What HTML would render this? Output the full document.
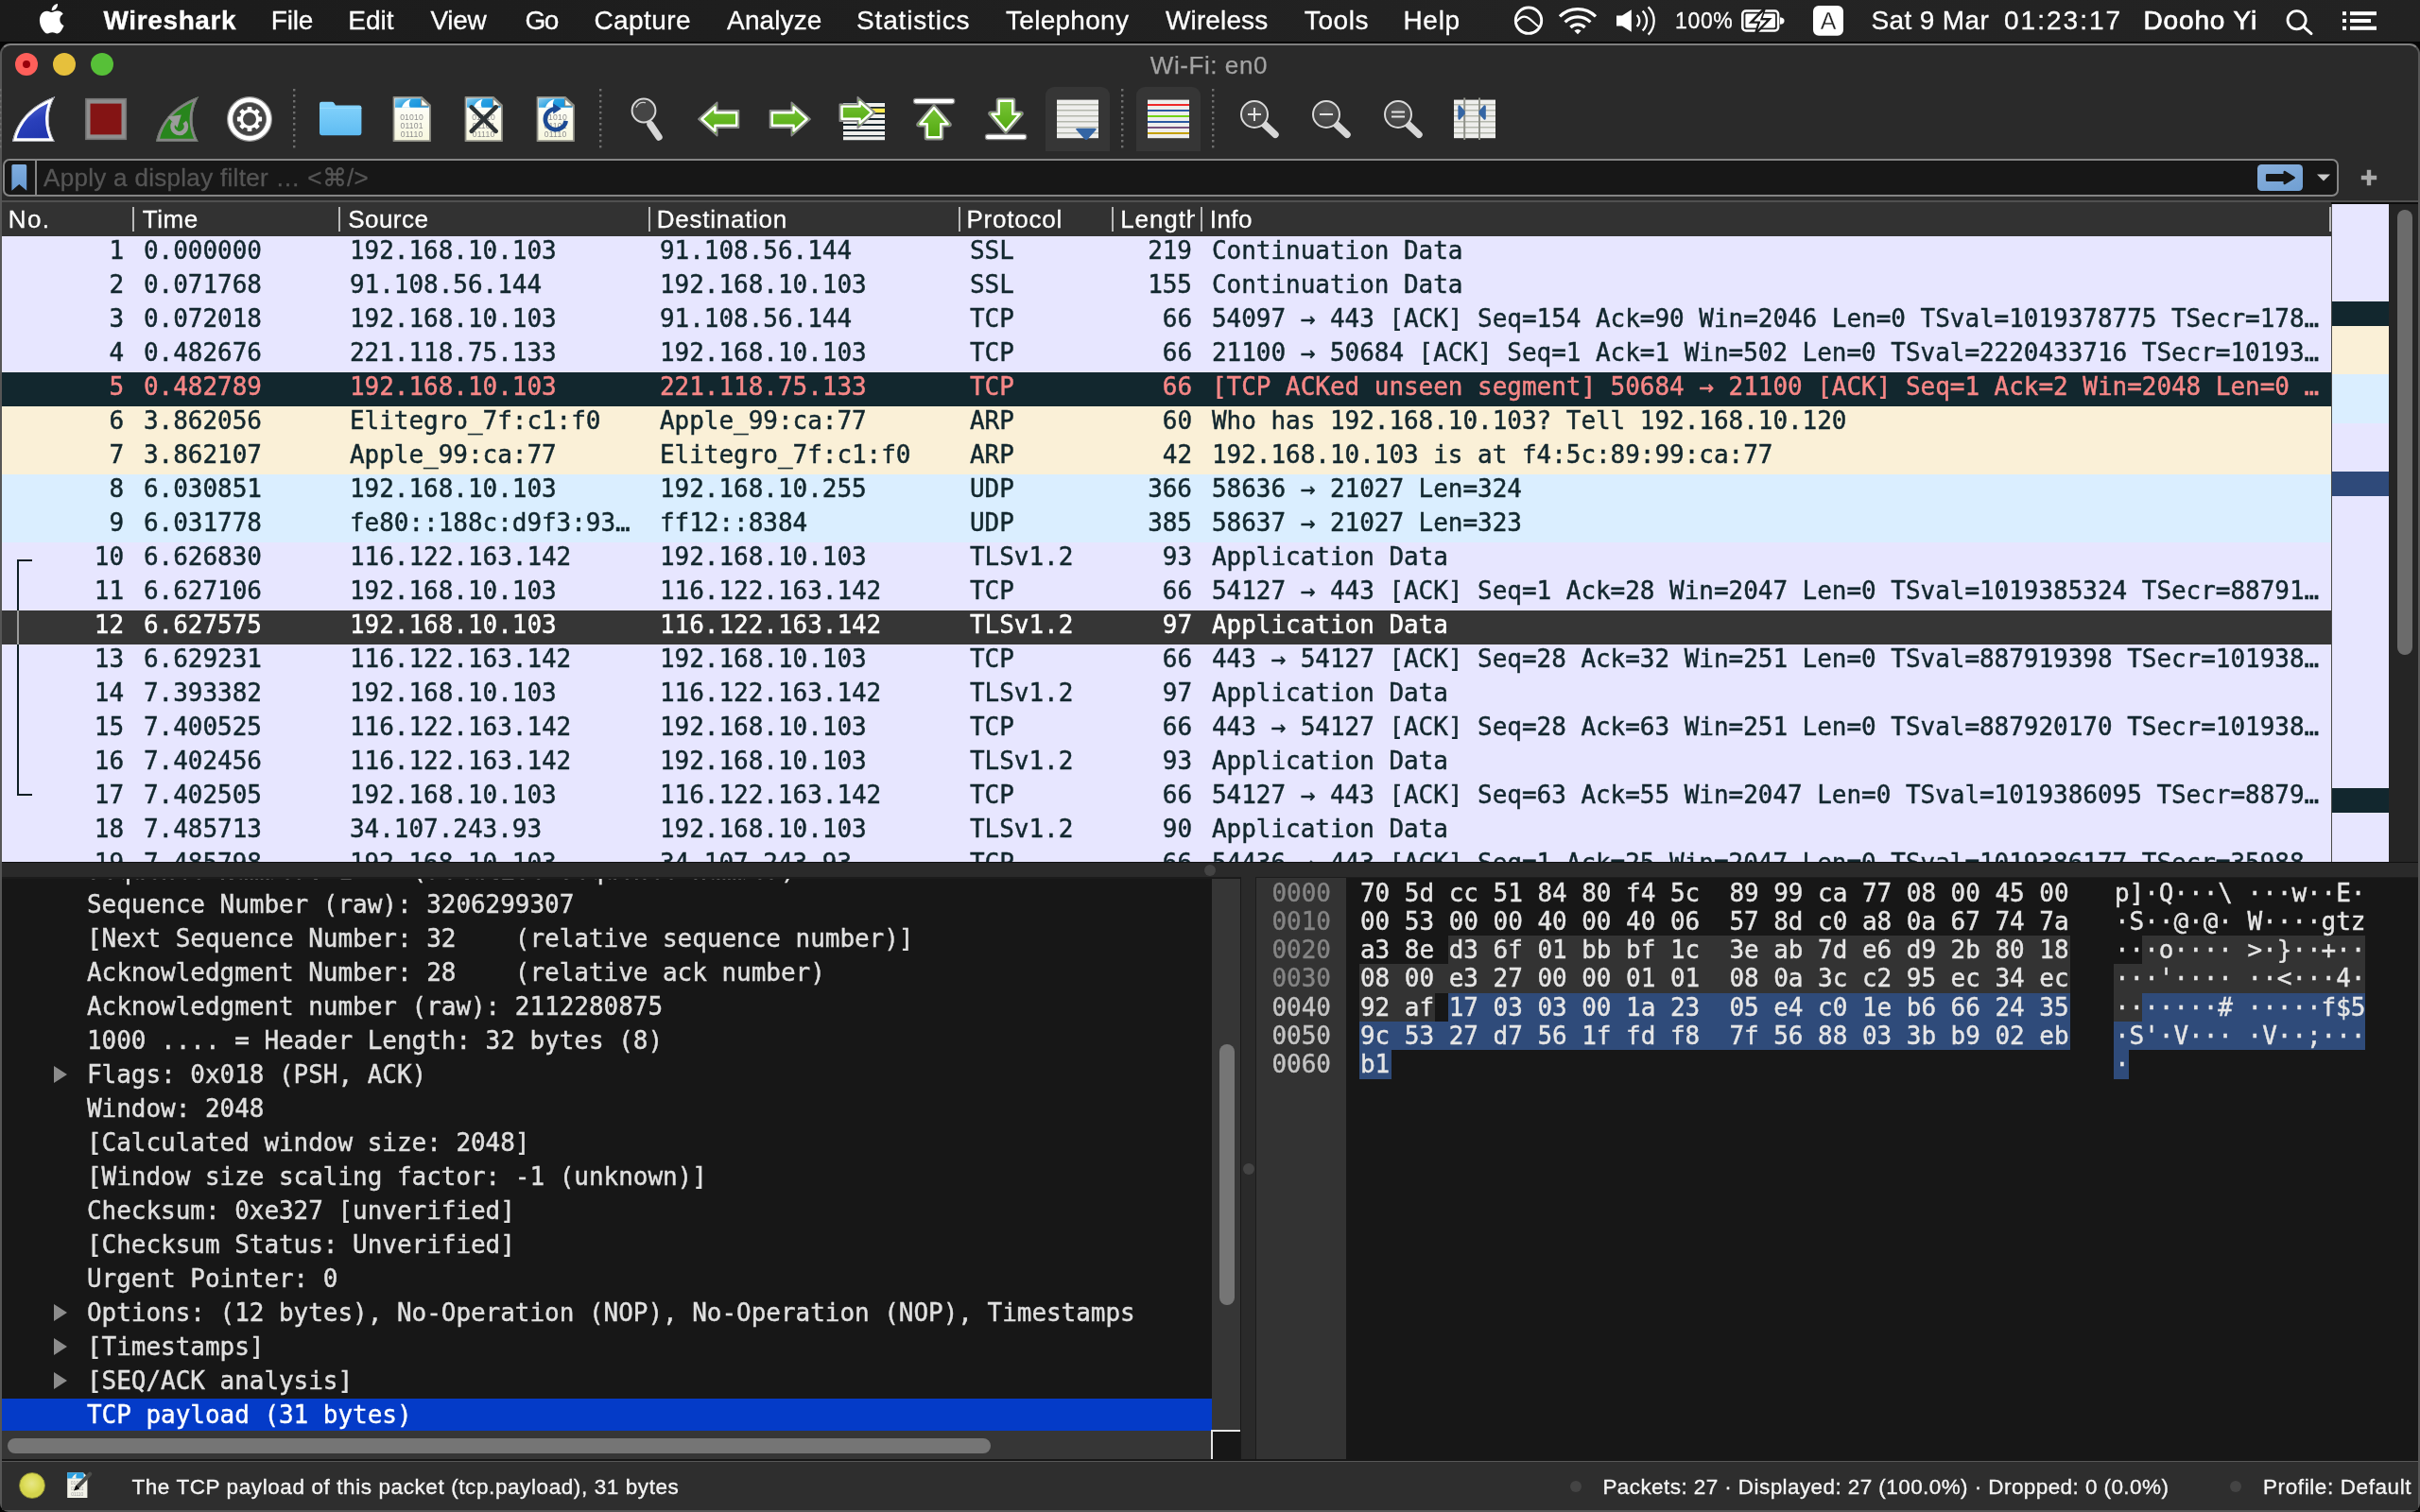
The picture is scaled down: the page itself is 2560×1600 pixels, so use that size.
<!DOCTYPE html>
<html lang="en"><head><meta charset="utf-8"><title>Wi-Fi: en0</title>
<style>
*{box-sizing:border-box;margin:0;padding:0}
html,body{width:2560px;height:1600px;overflow:hidden;background:#060606}
body{position:relative;font-family:"Liberation Sans",sans-serif;color:#fff}
#root{position:absolute;left:0;top:0;width:2560px;height:1600px;will-change:transform}
.abs{position:absolute}
.mono{font-family:"DejaVu Sans Mono","Liberation Mono",monospace;font-size:26px;white-space:pre;letter-spacing:-0.038px}
#menubar{position:absolute;left:0;top:0;width:2560px;height:46px;background:linear-gradient(90deg,#1b1b1b 0%,#1e1e1e 30%,#242424 70%,#222222 100%);border-bottom:2.5px solid #050505}
#menubar .mi{position:absolute;top:0;height:44px;line-height:44px;font-size:28px;color:#fff;white-space:pre;-webkit-text-stroke:0.3px #fff}
#win{position:absolute;left:0;top:46px;width:2560px;height:1554px;background:#2a2a2a;border-radius:11px 11px 9px 9px;overflow:hidden;border:2px solid #565656;border-top:2.5px solid #808080}
#title{position:absolute;left:1215px;top:46px;height:46px;line-height:47px;font-size:26px;color:#a3a3a3;white-space:pre;-webkit-text-stroke:0.25px #a3a3a3}
.tl{position:absolute;top:55.8px;width:24.4px;height:24.4px;border-radius:50%}
/* packet list */
#plist{position:absolute;left:2px;top:214px;width:2464px;height:698px;overflow:hidden;background:#e7e6ff}
#phead{position:absolute;left:0;top:0;width:2464px;height:36px;background:#323232}
#phead .h{position:absolute;top:0;height:36px;line-height:36.4px;font-size:26px;color:#fff;white-space:pre;-webkit-text-stroke:0.3px #fff}
#phead .s{position:absolute;top:5px;width:2.3px;height:26px;background:#b8b8b8}
.row{position:absolute;left:0;width:2464px;height:36px;line-height:31px;color:#12272e;-webkit-text-stroke:0.45px}
.row span{position:absolute;top:0}
.c0{left:0;width:129px;text-align:right}
.c1{left:150px}.c2{left:368px}.c3{left:696px}.c4{left:1024px}
.c5{left:1176px;width:83px;text-align:right}
.c6{left:1280px}
.tcp{background:#e7e6ff}.bad{background:#12272e;color:#f78787}.arp{background:#faf0d7}.udp{background:#daeeff}
.sel{background:#363636;color:#fff}
/* detail */
#detail{position:absolute;left:2px;top:928px;width:1311px;height:616px;border-top:2px solid #1b1b1b;background:#171717;overflow:hidden;border-right:1.5px solid #191919}
.dr{position:absolute;left:0;width:1280px;height:36px;line-height:36px;color:#e0e0e0;-webkit-text-stroke:0.4px}
.dr span{position:absolute;left:90px;top:0.3px}
.tri{position:absolute;left:55px;top:9.1px;width:0;height:0;border-left:14.5px solid #8c8c8c;border-top:9.5px solid transparent;border-bottom:9.5px solid transparent}
/* hex */
#hex{position:absolute;left:1328px;top:928px;width:1230px;height:616px;background:#171717;overflow:hidden;border:1.5px solid #1c1c1c;border-right:none;border-bottom:none}
.hr{position:absolute;left:0;height:30.3px;line-height:30.3px;color:#e6e6e6;-webkit-text-stroke:0.4px}
.hl{position:absolute}
#status{position:absolute;left:2px;top:1546px;width:2556px;height:52px;background:#2e2e2e;border-top:1.3px solid #585858}
.st{position:absolute;top:0;height:51px;line-height:54px;font-size:22.5px;color:#f4f4f4;white-space:pre;-webkit-text-stroke:0.35px #f4f4f4}
#m_Wireshark{letter-spacing:0.625px;transform:translateX(0.50px)}
#m_File{letter-spacing:-0.133px;transform:translateX(-0.30px)}
#m_Edit{letter-spacing:0.000px;transform:translateX(-0.80px)}
#m_View{letter-spacing:-0.300px;transform:translateX(0.50px)}
#m_Go{letter-spacing:-1.500px;transform:translateX(0.50px)}
#m_Capture{letter-spacing:0.401px;transform:translateX(0.50px)}
#m_Analyze{letter-spacing:0.100px;transform:translateX(1.10px)}
#m_Statistics{letter-spacing:0.823px;transform:translateX(1.10px)}
#m_Telephony{letter-spacing:0.286px;transform:translateX(2.00px)}
#m_Wireless{letter-spacing:0.129px;transform:translateX(1.00px)}
#m_Tools{letter-spacing:0.600px;transform:translateX(1.80px)}
#m_Help{letter-spacing:0.733px;transform:translateX(1.40px)}
#pct{letter-spacing:0.666px;transform:translateX(0.00px)}
#date{letter-spacing:0.375px;transform:translateX(-0.60px)}
#clock{letter-spacing:2.028px;transform:translateX(0.00px)}
#user{letter-spacing:0.857px;transform:translateX(-0.50px)}
#h_No\.{letter-spacing:1.300px;transform:translateX(-1.20px)}
#h_Time{letter-spacing:0.500px;transform:translateX(0.80px)}
#h_Source{letter-spacing:0.460px;transform:translateX(0.20px)}
#h_Destination{letter-spacing:0.740px;transform:translateX(-1.20px)}
#h_Protocol{letter-spacing:0.771px;transform:translateX(-1.60px)}
#h_Info{letter-spacing:0.433px;transform:translateX(-0.20px)}
#title{letter-spacing:0.567px;transform:translateX(1.80px)}
#ph{letter-spacing:0.304px;transform:translateX(1.00px)}
#st1{letter-spacing:0.594px;transform:translateX(0.40px)}
#st2{letter-spacing:0.422px;transform:translateX(-0.60px)}
#st3{letter-spacing:0.600px;transform:translateX(-1.00px)}
</style></head>
<body>
<div id="root">
<div id="menubar">
<svg class="abs" style="left:39px;top:4px" width="32" height="32" viewBox="0 0 24.4 24.4"><path fill="#fff" d="M12.152 6.896c-.948 0-2.415-1.078-3.96-1.04-2.04.027-3.91 1.183-4.961 3.014-2.117 3.675-.546 9.103 1.519 12.09 1.013 1.454 2.208 3.09 3.792 3.039 1.52-.065 2.09-.987 3.935-.987 1.831 0 2.35.987 3.96.948 1.637-.026 2.676-1.48 3.676-2.948 1.156-1.688 1.636-3.325 1.662-3.415-.039-.013-3.182-1.221-3.22-4.857-.026-3.04 2.48-4.494 2.597-4.559-1.429-2.09-3.623-2.324-4.39-2.376-2-.156-3.675 1.09-4.61 1.09zM15.53 3.83c.843-1.012 1.4-2.427 1.245-3.83-1.207.052-2.662.805-3.532 1.818-.78.896-1.454 2.338-1.273 3.714 1.338.104 2.715-.688 3.559-1.701"/></svg>

<div class="mi" id="m_Wireshark" style="left:109px;font-weight:bold;">Wireshark</div>
<div class="mi" id="m_File" style="left:287px;">File</div>
<div class="mi" id="m_Edit" style="left:369px;">Edit</div>
<div class="mi" id="m_View" style="left:455px;">View</div>
<div class="mi" id="m_Go" style="left:555px;">Go</div>
<div class="mi" id="m_Capture" style="left:628px;">Capture</div>
<div class="mi" id="m_Analyze" style="left:768px;">Analyze</div>
<div class="mi" id="m_Statistics" style="left:905px;">Statistics</div>
<div class="mi" id="m_Telephony" style="left:1062px;">Telephony</div>
<div class="mi" id="m_Wireless" style="left:1232px;">Wireless</div>
<div class="mi" id="m_Tools" style="left:1378px;">Tools</div>
<div class="mi" id="m_Help" style="left:1483px;">Help</div>
<svg class="abs" style="left:1596px;top:0" width="360" height="44" viewBox="1596 0 360 44">
<g fill="none" stroke="#fff">
<circle cx="1617" cy="21.7" r="13.7" stroke-width="2.9"/>
<path d="M1604.6,22.6 C1609,17 1613.4,16.4 1617.6,19.6 C1622,23 1626,27.4 1629.6,29.4" stroke-width="2"/>
<path d="M1650,17.4 A27,27 0 0 1 1688,17.4" stroke-width="3.3"/>
<path d="M1655.6,23.4 A19,19 0 0 1 1682.4,23.4" stroke-width="3.3"/>
<path d="M1661.4,29 A10.8,10.8 0 0 1 1676.6,29" stroke-width="3.3"/>
<path d="M1731.6,16 A8,8 0 0 1 1731.6,28" stroke-width="2.3"/>
<path d="M1737.6,11.6 A14.4,14.4 0 0 1 1737.6,32.4" stroke-width="2.3"/>
<path d="M1743.6,7.4 A20.6,20.6 0 0 1 1743.6,36.6" stroke-width="2.3"/>
<rect x="1843.3" y="11.5" width="37.8" height="21" rx="3.6" stroke-width="2.5"/>
</g>
<g fill="#fff">
<path d="M1665.4,32.6 A5.4,5.4 0 0 1 1672.6,32.6 L1669,36.2 Z"/>
<path d="M1710,16.6 H1716 L1725.8,10.2 V33.8 L1716,27.4 H1710 Z"/>
<rect x="1846.4" y="14.6" width="31.6" height="14.8" rx="1.4"/>
<path d="M1883,18.2 Q1887.6,18.6 1887.6,22 Q1887.6,25.4 1883,25.8 Z"/>
</g>
<path d="M1866.6,9 L1852.6,23.4 H1861 L1857.4,35 L1871.6,20.4 H1863 Z" fill="#fff" stroke="#1d1d1d" stroke-width="2.6" stroke-linejoin="miter"/>
<path d="M1865.2,12.6 L1855.6,22.4 H1862.6 L1859.4,31.4 L1868.8,21.6 H1861.8 Z" fill="#fff"/>
<rect x="1918" y="6" width="32" height="31.8" rx="6" fill="#fff"/>
</svg>
<div class="mi" id="pct" style="left:1772px;font-size:23px;line-height:44px">100%</div>
<div class="mi" id="inA" style="left:1918px;width:32px;text-align:center;font-size:25px;color:#1e1e1e;line-height:44px">A</div>
<div class="mi" id="date" style="left:1980px;font-size:28px">Sat 9 Mar</div>
<div class="mi" id="clock" style="left:2120px;font-size:28px">01:23:17</div>
<div class="mi" id="user" style="left:2268px;font-size:28px;-webkit-text-stroke:0.7px #fff">Dooho Yi</div>
<svg class="abs" style="left:2410px;top:0" width="120" height="44" viewBox="2410 0 120 44">
<circle cx="2429.6" cy="21.2" r="9.6" fill="none" stroke="#fff" stroke-width="2.8"/>
<path d="M2436.6,28.2 L2445,35.6" stroke="#fff" stroke-width="3" stroke-linecap="round"/>
<g fill="#fff"><rect x="2478" y="12.2" width="4" height="4"/><rect x="2478" y="20" width="4" height="4"/><rect x="2478" y="27.8" width="4" height="4"/>
<rect x="2486" y="12.2" width="28" height="4"/><rect x="2486" y="20" width="22" height="4"/><rect x="2486" y="27.8" width="28" height="4"/></g>
</svg>

</div>
<div id="win"></div>
<div class="tl" style="left:15.9px;background:#fe5f5a"><div class="abs" style="left:8.3px;top:8.3px;width:7.8px;height:7.8px;border-radius:50%;background:#99000b"></div></div>
<div class="tl" style="left:55.9px;background:#e6c03c"></div>
<div class="tl" style="left:95.9px;background:#57c038"></div>
<div id="title">Wi-Fi: en0</div>
<div class="abs" style="left:1106px;top:92px;width:68px;height:68px;background:#363636;border-radius:9px 9px 0 0"></div>
<div class="abs" style="left:1202px;top:92px;width:68px;height:68px;background:#363636;border-radius:9px 9px 0 0"></div>
<svg class="abs" style="left:0;top:88px" width="1640" height="76" viewBox="0 88 1640 76">
<defs>
<linearGradient id="gBlue" x1="0.2" y1="0" x2="0.6" y2="1"><stop offset="0" stop-color="#6a7bd8"/><stop offset="0.55" stop-color="#2a40bb"/><stop offset="1" stop-color="#1f35ad"/></linearGradient>
<linearGradient id="gGreen" x1="0" y1="0" x2="0" y2="1"><stop offset="0" stop-color="#7cc83a"/><stop offset="1" stop-color="#4ea50c"/></linearGradient>
<linearGradient id="gFolder" x1="0" y1="0" x2="0" y2="1"><stop offset="0" stop-color="#86d4fc"/><stop offset="1" stop-color="#5fbcf2"/></linearGradient>
<linearGradient id="gPaper" x1="0" y1="0" x2="0" y2="1"><stop offset="0" stop-color="#ffffff"/><stop offset="1" stop-color="#f7f7de"/></linearGradient>
<linearGradient id="gBand" x1="0" y1="0" x2="1" y2="0.4"><stop offset="0" stop-color="#8fcdee"/><stop offset="0.5" stop-color="#2aa2e2"/><stop offset="1" stop-color="#1491dc"/></linearGradient>
<radialGradient id="gLens" cx="0.5" cy="0.35" r="0.7"><stop offset="0" stop-color="#5a5a5a"/><stop offset="1" stop-color="#3c3c3c"/></radialGradient>
<clipPath id="cFin"><path d="M1.2,47.8 C4,33 14,12 46.2,0.2 C39,12 36,30 45.8,47.8 Z"/></clipPath>
<g id="fileicon">
 <path d="M4.5,0.8 H34 L43,9.5 V47.2 H4.5 Z" fill="url(#gPaper)" stroke="#8b8b83" stroke-width="1.8" stroke-linejoin="round"/>
 <path d="M6,2.3 H33.5 L41.5,10 V11.8 H6 Z" fill="url(#gBand)"/>
 <path d="M13,11.8 C14.5,7.5 17.5,4.2 22.5,3 C20.6,6 20.3,9 21.8,11.8 Z" fill="#fff"/>
 <path d="M33.6,2 V10 H42 Z" fill="#fdfdf2" stroke="#8b8b83" stroke-width="1.2" stroke-linejoin="round"/>
 <text x="23.6" y="24.6" font-family="Liberation Sans, sans-serif" font-size="8.6" fill="#8f8f8f" text-anchor="middle" letter-spacing="0.2">01010</text>
 <text x="23.6" y="33.7" font-family="Liberation Sans, sans-serif" font-size="8.6" fill="#8f8f8f" text-anchor="middle" letter-spacing="0.2">01101</text>
 <text x="23.6" y="42.8" font-family="Liberation Sans, sans-serif" font-size="8.6" fill="#8f8f8f" text-anchor="middle" letter-spacing="0.2">01110</text>
</g>
<g id="zoomglass">
 <path d="M30.5,29.5 L42,40.4" stroke="#d6d6d6" stroke-width="7.4" stroke-linecap="round"/>
 <circle cx="20" cy="19" r="14" fill="url(#gLens)" stroke="#d9d9d9" stroke-width="2"/>
</g>
<g id="whitelist">
 <rect x="2" y="3.6" width="44" height="40.6" fill="#eeeeec"/>
 <path d="M2,8.8H46M2,14.8H46M2,20.8H46M2,26.8H46M2,32.8H46M2,38.8H46" stroke="#b4b7ad" stroke-width="1.6"/>
</g>
</defs>

<!-- 1 start capture -->
<g transform="translate(12,102)">
 <path d="M1.2,47.8 C4,33 14,12 46.2,0.2 C39,12 36,30 45.8,47.8 Z" fill="url(#gBlue)"/>
 <path d="M1.2,47.8 C4,33 14,12 46.2,0.2 C39,12 36,30 45.8,47.8 Z" fill="none" stroke="#fff" stroke-width="7" clip-path="url(#cFin)" stroke-linejoin="round"/>
 <path d="M1.2,47.8 C4,33 14,12 46.2,0.2 C39,12 36,30 45.8,47.8 Z" fill="none" stroke="#9a9a9a" stroke-width="1.6" clip-path="url(#cFin)"/>
</g>
<!-- 2 stop -->
<g transform="translate(88,102)">
 <rect x="2.9" y="2.7" width="42.4" height="42.6" fill="#8e8e8e" stroke="#747474" stroke-width="1.6"/>
 <rect x="7.5" y="7.6" width="33" height="32.8" fill="#841414"/>
</g>
<!-- 3 restart -->
<g transform="translate(164,102)">
 <path d="M1.2,47.8 C4,33 14,12 46.2,0.2 C39,12 36,30 45.8,47.8 Z" fill="#28851d"/>
 <path d="M1.2,47.8 C4,33 14,12 46.2,0.2 C39,12 36,30 45.8,47.8 Z" fill="none" stroke="#858585" stroke-width="6" clip-path="url(#cFin)" stroke-linejoin="round"/>
 <path d="M1.2,47.8 C4,33 14,12 46.2,0.2 C39,12 36,30 45.8,47.8 Z" fill="none" stroke="#6f6f6f" stroke-width="1.6" clip-path="url(#cFin)"/>
 <path d="M31.2,27.2 A7.2,7.2 0 1 1 19.6,28" fill="none" stroke="#9c9c9c" stroke-width="4.6"/>
 <path d="M13.4,21.6 L27.8,19.4 L23.6,33 Z" fill="#9c9c9c"/>
</g>
<!-- 4 options gear -->
<g transform="translate(240,102)">
 <circle cx="24" cy="24" r="23.4" fill="#fff" stroke="#8d8d8d" stroke-width="1.2"/>
 <circle cx="24" cy="24" r="17.6" fill="#454545" stroke="#777" stroke-width="0.8"/>
 <g fill="#fff">
  <circle cx="24" cy="24" r="10.2"/>
  <g id="tooth"><rect x="21.6" y="10.9" width="4.8" height="5" rx="0.9"/></g>
  <use href="#tooth" transform="rotate(45 24 24)"/><use href="#tooth" transform="rotate(90 24 24)"/><use href="#tooth" transform="rotate(135 24 24)"/>
  <use href="#tooth" transform="rotate(180 24 24)"/><use href="#tooth" transform="rotate(225 24 24)"/><use href="#tooth" transform="rotate(270 24 24)"/><use href="#tooth" transform="rotate(315 24 24)"/>
 </g>
 <circle cx="24" cy="24" r="7" fill="#454545"/>
</g>
<!-- separators -->
<g fill="#6e6e6e">
 <g id="sepdots"><rect x="-1" y="94" width="2.4" height="2.4"/><rect x="-1" y="100" width="2.4" height="2.4"/><rect x="-1" y="106" width="2.4" height="2.4"/><rect x="-1" y="112" width="2.4" height="2.4"/><rect x="-1" y="118" width="2.4" height="2.4"/><rect x="-1" y="124" width="2.4" height="2.4"/><rect x="-1" y="130" width="2.4" height="2.4"/><rect x="-1" y="136" width="2.4" height="2.4"/><rect x="-1" y="142" width="2.4" height="2.4"/><rect x="-1" y="148" width="2.4" height="2.4"/><rect x="-1" y="154" width="2.4" height="2.4"/></g>
</g>
<use href="#sepdots" x="311" fill="#6e6e6e"/><use href="#sepdots" x="635" fill="#6e6e6e"/><use href="#sepdots" x="1187" fill="#6e6e6e"/><use href="#sepdots" x="1283" fill="#6e6e6e"/>
<!-- 5 folder -->
<g transform="translate(336,102)">
 <path d="M2,8 Q2,5.8 4.2,5.8 H15 Q16.6,5.8 17.6,7.2 L19,9.4 H44 Q46.4,9.4 46.4,11.8 V38.8 Q46.4,41.2 44,41.2 H4.4 Q2,41.2 2,38.8 Z" fill="url(#gFolder)"/>
 <path d="M2,12.4 H46.4" stroke="#9adcfd" stroke-width="1"/>
</g>
<!-- 6,7,8 file icons -->
<use href="#fileicon" x="412" y="102"/>
<use href="#fileicon" x="488" y="102"/>
<g transform="translate(488,102)"><path d="M10.8,11.4 L36.6,36.8 M36.6,11.4 L10.8,36.8" stroke="#2e3436" stroke-width="4.6" stroke-linecap="round"/></g>
<use href="#fileicon" x="564" y="102"/>
<g transform="translate(564,102)">
 <path d="M34.7,25.9 A11,11 0 1 1 23.8,13.2" fill="none" stroke="#1d4a94" stroke-width="4.6"/>
 <path d="M21.2,7.4 L29.8,13 L21.2,18.6 Z" fill="#1d4a94"/>
</g>
<!-- 9 find -->
<g transform="translate(660,102)">
 <path d="M28,29.6 L37,43" stroke="#d6d6d6" stroke-width="7.4" stroke-linecap="round"/>
 <circle cx="21" cy="15" r="12.4" fill="#454545" stroke="#d6d6d6" stroke-width="2"/>
 <path d="M13.2,11.2 A8.6,8.6 0 0 1 22.4,6.6" fill="none" stroke="#cfcfcf" stroke-width="1.4" stroke-linecap="round"/>
</g>
<!-- 10 back -->
<g transform="translate(736,102)">
 <path id="arrL" d="M3,24 L22.6,6.4 V15 H45.4 V33 H22.6 V41.6 Z" fill="url(#gGreen)" stroke="#8a8a8a" stroke-width="1.8" stroke-linejoin="round"/>
 <path d="M6.4,24 L20.4,11.4 V17.2 H43.2 V30.8 H20.4 V36.6 Z" fill="none" stroke="#fff" stroke-width="2.4" stroke-linejoin="round"/>
</g>
<!-- 11 forward -->
<g transform="translate(860,102) scale(-1,1)">
 <path d="M3,24 L22.6,6.4 V15 H45.4 V33 H22.6 V41.6 Z" fill="url(#gGreen)" stroke="#8a8a8a" stroke-width="1.8" stroke-linejoin="round"/>
 <path d="M6.4,24 L20.4,11.4 V17.2 H43.2 V30.8 H20.4 V36.6 Z" fill="none" stroke="#fff" stroke-width="2.4" stroke-linejoin="round"/>
</g>
<!-- 12 goto -->
<g transform="translate(890,102)">
 <rect x="2" y="6" width="44" height="40.4" fill="#16252c"/>
 <path d="M2,9H46M2,21H46M2,27H46M2,33H46M2,39H46M2,44.4H46" stroke="#eeeeec" stroke-width="3.8"/>
 <path d="M2,15H46" stroke="#fce94f" stroke-width="4.6"/>
 <path d="M35.6,17 L17.4,0.8 V8.4 H-1.6 V26 H17.4 V33.4 Z" fill="url(#gGreen)" stroke="#8a8a8a" stroke-width="1.8" stroke-linejoin="round"/>
 <path d="M32.2,17 L19.6,5.8 V10.6 H0.6 V23.8 H19.6 V28.4 Z" fill="none" stroke="#fff" stroke-width="2.4" stroke-linejoin="round"/>
</g>
<!-- 13 first -->
<g transform="translate(964,102)">
 <rect x="2.4" y="2.4" width="43.4" height="5.4" rx="2.7" fill="#fff" stroke="#8a8a8a" stroke-width="1.2"/>
 <path d="M24,8.6 L6.2,29 Q5.4,31.6 8.4,31.6 H14.6 V44 Q14.6,45.6 16.2,45.6 H31.8 Q33.4,45.6 33.4,44 V31.6 H39.6 Q42.6,31.6 41.8,29 Z" fill="url(#gGreen)" stroke="#8a8a8a" stroke-width="1.8" stroke-linejoin="round"/>
 <path d="M24,12 L9.4,29.2 H16.8 V43.2 H31.2 V29.2 H38.6 Z" fill="none" stroke="#fff" stroke-width="2.4" stroke-linejoin="round"/>
</g>
<!-- 14 last -->
<g transform="translate(1040,102)">
 <rect x="2.4" y="40.2" width="43.4" height="5.4" rx="2.7" fill="#fff" stroke="#8a8a8a" stroke-width="1.2"/>
 <path d="M24,39.4 L6.2,19 Q5.4,16.4 8.4,16.4 H14.6 V4 Q14.6,2.4 16.2,2.4 H31.8 Q33.4,2.4 33.4,4 V16.4 H39.6 Q42.6,16.4 41.8,19 Z" fill="url(#gGreen)" stroke="#8a8a8a" stroke-width="1.8" stroke-linejoin="round"/>
 <path d="M24,36 L9.4,18.8 H16.8 V4.8 H31.2 V18.8 H38.6 Z" fill="none" stroke="#fff" stroke-width="2.4" stroke-linejoin="round"/>
</g>
<!-- 15 autoscroll -->
<g transform="translate(1116,102)">
 <use href="#whitelist"/>
 <path d="M22.2,35 Q21.4,34 24,33.8 H42 Q44.4,34 43.8,35 L34.4,45.4 Q33,46.6 31.6,45.4 Z" fill="#3465a4"/>
</g>
<!-- 16 colorize -->
<g transform="translate(1212,102)">
 <rect x="2" y="3.6" width="44" height="40.6" fill="#eeeeec"/>
 <path d="M2,9H46" stroke="#ef2929" stroke-width="2.2"/><path d="M2,15H46" stroke="#2a58a0" stroke-width="2.2"/><path d="M2,21H46" stroke="#73d216" stroke-width="2.2"/><path d="M2,27H46" stroke="#2a58a0" stroke-width="2.2"/><path d="M2,33H46" stroke="#75507b" stroke-width="2.2"/><path d="M2,39H46" stroke="#c4a000" stroke-width="2.2"/>
</g>
<!-- 17,18,19 zoom -->
<g transform="translate(1307,102)"><use href="#zoomglass"/><path d="M13,19H27M20,12V26" stroke="#e4e4e4" stroke-width="2"/></g>
<g transform="translate(1383,102)"><use href="#zoomglass"/><path d="M13,19H27" stroke="#e4e4e4" stroke-width="2"/></g>
<g transform="translate(1459,102)"><use href="#zoomglass"/><path d="M13,16.6H27M13,21.4H27" stroke="#e4e4e4" stroke-width="2"/></g>
<!-- 20 resize columns -->
<g transform="translate(1536,102)">
 <use href="#whitelist"/>
 <path d="M13.2,1.6V46M29,1.6V46" stroke="#8f9189" stroke-width="2"/>
 <path d="M6.4,11 Q6.4,8.6 8.4,9.6 L13.6,15.4 V18.6 L8.4,24.4 Q6.4,25.4 6.4,23 Z" fill="#3465a4"/>
 <path d="M35.8,11 Q35.8,8.6 33.8,9.6 L28.6,15.4 V18.6 L33.8,24.4 Q35.8,25.4 35.8,23 Z" fill="#3465a4"/>
</g>
</svg>

<div class="abs" style="left:3px;top:168px;width:2471px;height:40px;background:#171717;border:2px solid #858585;border-radius:7px"></div>
<div class="abs" style="left:37px;top:170px;width:2px;height:36px;background:#858585"></div>
<svg class="abs" style="left:10px;top:172px" width="22" height="32" viewBox="0 0 22 32">
<defs><linearGradient id="gBm" x1="0" y1="0" x2="0" y2="1"><stop offset="0" stop-color="#80aee0"/><stop offset="1" stop-color="#6698d0"/></linearGradient></defs>
<path d="M2.4,3.6 Q2.4,2 4,2 H16.6 Q18.2,2 18.2,3.6 V29.8 L10.3,23 L2.4,29.8 Z" fill="url(#gBm)"/></svg>
<div class="abs" id="ph" style="left:45px;top:168px;height:40px;line-height:41.4px;font-size:26px;color:#555;white-space:pre;-webkit-text-stroke:0.3px #555">Apply a display filter … &lt;⌘/&gt;</div>
<div class="abs" style="left:2388px;top:174px;width:48px;height:28px;border-radius:4.5px;background:linear-gradient(160deg,#8ab0dc,#6f9fd3)"></div>
<svg class="abs" style="left:2388px;top:174px" width="48" height="28" viewBox="0 0 48 28"><path d="M10.2,11.2 H28.8 V8 L38.6,14 L28.8,20 V16.8 H10.2 Z" fill="#161616" stroke="#161616" stroke-width="2.6" stroke-linejoin="round"/></svg>
<svg class="abs" style="left:2450px;top:183px" width="16" height="10" viewBox="0 0 16 10"><path d="M1,1.4 H15 L8,8.6 Z" fill="#c9c9c9"/></svg>
<svg class="abs" style="left:2496px;top:178px" width="20" height="20" viewBox="0 0 20 20"><path d="M10,1.8 V18.2 M1.8,10 H18.2" stroke="#a9a9a9" stroke-width="4.4"/></svg>

<div class="abs" style="left:2px;top:212.2px;width:2556px;height:1.9px;background:#505050"></div>
<div class="abs" style="left:2466px;top:214px;width:92px;height:2px;background:#0d0d0d;z-index:3"></div>
<div id="plist">
<div id="phead">
<div class="h" id="h_No." style="left:8.0px;">No.</div><div class="h" id="h_Time" style="left:148.0px;">Time</div><div class="h" id="h_Source" style="left:366.0px;">Source</div><div class="h" id="h_Destination" style="left:694.0px;">Destination</div><div class="h" id="h_Protocol" style="left:1022.0px;">Protocol</div><div class="h" id="h_Length" style="left:1183.2px;width:78.6px;overflow:hidden;letter-spacing:0.9px;">Length</div><div class="h" id="h_Info" style="left:1278.0px;">Info</div><div class="s" style="left:137.85px"></div><div class="s" style="left:355.85px"></div><div class="s" style="left:683.95px"></div><div class="s" style="left:1011.75px"></div><div class="s" style="left:1173.75px"></div><div class="s" style="left:1267.55px"></div><div class="s" style="left:2461.85px"></div>
</div>
<div class="row mono tcp" style="top:36px"><span class="c0">1</span><span class="c1">0.000000</span><span class="c2">192.168.10.103</span><span class="c3">91.108.56.144</span><span class="c4">SSL</span><span class="c5">219</span><span class="c6">Continuation Data</span></div>
<div class="row mono tcp" style="top:72px"><span class="c0">2</span><span class="c1">0.071768</span><span class="c2">91.108.56.144</span><span class="c3">192.168.10.103</span><span class="c4">SSL</span><span class="c5">155</span><span class="c6">Continuation Data</span></div>
<div class="row mono tcp" style="top:108px"><span class="c0">3</span><span class="c1">0.072018</span><span class="c2">192.168.10.103</span><span class="c3">91.108.56.144</span><span class="c4">TCP</span><span class="c5">66</span><span class="c6">54097 → 443 [ACK] Seq=154 Ack=90 Win=2046 Len=0 TSval=1019378775 TSecr=178…</span></div>
<div class="row mono tcp" style="top:144px"><span class="c0">4</span><span class="c1">0.482676</span><span class="c2">221.118.75.133</span><span class="c3">192.168.10.103</span><span class="c4">TCP</span><span class="c5">66</span><span class="c6">21100 → 50684 [ACK] Seq=1 Ack=1 Win=502 Len=0 TSval=2220433716 TSecr=10193…</span></div>
<div class="row mono bad" style="top:180px"><span class="c0">5</span><span class="c1">0.482789</span><span class="c2">192.168.10.103</span><span class="c3">221.118.75.133</span><span class="c4">TCP</span><span class="c5">66</span><span class="c6">[TCP ACKed unseen segment] 50684 → 21100 [ACK] Seq=1 Ack=2 Win=2048 Len=0 …</span></div>
<div class="row mono arp" style="top:216px"><span class="c0">6</span><span class="c1">3.862056</span><span class="c2">Elitegro_7f:c1:f0</span><span class="c3">Apple_99:ca:77</span><span class="c4">ARP</span><span class="c5">60</span><span class="c6">Who has 192.168.10.103? Tell 192.168.10.120</span></div>
<div class="row mono arp" style="top:252px"><span class="c0">7</span><span class="c1">3.862107</span><span class="c2">Apple_99:ca:77</span><span class="c3">Elitegro_7f:c1:f0</span><span class="c4">ARP</span><span class="c5">42</span><span class="c6">192.168.10.103 is at f4:5c:89:99:ca:77</span></div>
<div class="row mono udp" style="top:288px"><span class="c0">8</span><span class="c1">6.030851</span><span class="c2">192.168.10.103</span><span class="c3">192.168.10.255</span><span class="c4">UDP</span><span class="c5">366</span><span class="c6">58636 → 21027 Len=324</span></div>
<div class="row mono udp" style="top:324px"><span class="c0">9</span><span class="c1">6.031778</span><span class="c2">fe80::188c:d9f3:93…</span><span class="c3">ff12::8384</span><span class="c4">UDP</span><span class="c5">385</span><span class="c6">58637 → 21027 Len=323</span></div>
<div class="row mono tcp" style="top:360px"><span class="c0">10</span><span class="c1">6.626830</span><span class="c2">116.122.163.142</span><span class="c3">192.168.10.103</span><span class="c4">TLSv1.2</span><span class="c5">93</span><span class="c6">Application Data</span></div>
<div class="row mono tcp" style="top:396px"><span class="c0">11</span><span class="c1">6.627106</span><span class="c2">192.168.10.103</span><span class="c3">116.122.163.142</span><span class="c4">TCP</span><span class="c5">66</span><span class="c6">54127 → 443 [ACK] Seq=1 Ack=28 Win=2047 Len=0 TSval=1019385324 TSecr=88791…</span></div>
<div class="row mono sel" style="top:432px"><span class="c0">12</span><span class="c1">6.627575</span><span class="c2">192.168.10.103</span><span class="c3">116.122.163.142</span><span class="c4">TLSv1.2</span><span class="c5">97</span><span class="c6">Application Data</span></div>
<div class="row mono tcp" style="top:468px"><span class="c0">13</span><span class="c1">6.629231</span><span class="c2">116.122.163.142</span><span class="c3">192.168.10.103</span><span class="c4">TCP</span><span class="c5">66</span><span class="c6">443 → 54127 [ACK] Seq=28 Ack=32 Win=251 Len=0 TSval=887919398 TSecr=101938…</span></div>
<div class="row mono tcp" style="top:504px"><span class="c0">14</span><span class="c1">7.393382</span><span class="c2">192.168.10.103</span><span class="c3">116.122.163.142</span><span class="c4">TLSv1.2</span><span class="c5">97</span><span class="c6">Application Data</span></div>
<div class="row mono tcp" style="top:540px"><span class="c0">15</span><span class="c1">7.400525</span><span class="c2">116.122.163.142</span><span class="c3">192.168.10.103</span><span class="c4">TCP</span><span class="c5">66</span><span class="c6">443 → 54127 [ACK] Seq=28 Ack=63 Win=251 Len=0 TSval=887920170 TSecr=101938…</span></div>
<div class="row mono tcp" style="top:576px"><span class="c0">16</span><span class="c1">7.402456</span><span class="c2">116.122.163.142</span><span class="c3">192.168.10.103</span><span class="c4">TLSv1.2</span><span class="c5">93</span><span class="c6">Application Data</span></div>
<div class="row mono tcp" style="top:612px"><span class="c0">17</span><span class="c1">7.402505</span><span class="c2">192.168.10.103</span><span class="c3">116.122.163.142</span><span class="c4">TCP</span><span class="c5">66</span><span class="c6">54127 → 443 [ACK] Seq=63 Ack=55 Win=2047 Len=0 TSval=1019386095 TSecr=8879…</span></div>
<div class="row mono tcp" style="top:648px"><span class="c0">18</span><span class="c1">7.485713</span><span class="c2">34.107.243.93</span><span class="c3">192.168.10.103</span><span class="c4">TLSv1.2</span><span class="c5">90</span><span class="c6">Application Data</span></div>
<div class="row mono tcp" style="top:684px"><span class="c0">19</span><span class="c1">7.485798</span><span class="c2">192.168.10.103</span><span class="c3">34.107.243.93</span><span class="c4">TCP</span><span class="c5">66</span><span class="c6">54436 → 443 [ACK] Seq=1 Ack=25 Win=2047 Len=0 TSval=1019386177 TSecr=35988…</span></div>
<div class="abs" style="left:16px;top:378px;width:16px;height:250px;border:2px solid #0e1e24;border-right:none"></div>
<div class="abs" style="left:16px;top:432px;width:2px;height:36px;background:#9a9a9a"></div>
</div>
<div class="abs" style="left:2466px;top:214px;width:1px;height:698px;background:#4a4a4a"></div>
<div class="abs" style="left:2467px;top:216px;width:60px;height:696px;background:#e7e6ff"></div>
<div class="abs" style="left:2467px;top:319px;width:60px;height:25.5px;background:#12272e"></div>
<div class="abs" style="left:2467px;top:344.5px;width:60px;height:51.5px;background:#faf0d7"></div>
<div class="abs" style="left:2467px;top:396px;width:60px;height:51.5px;background:#daeeff"></div>
<div class="abs" style="left:2467px;top:499px;width:60px;height:25.5px;background:#2f4a7a"></div>
<div class="abs" style="left:2467px;top:833.5px;width:60px;height:26px;background:#12272e"></div>
<div class="abs" style="left:2527px;top:214px;width:31px;height:698px;background:#252525"></div>
<div class="abs" style="left:2536px;top:222px;width:16px;height:471px;border-radius:8px;background:#6b6b6b"></div>

<div class="abs" style="left:2px;top:912px;width:2556px;height:1.2px;background:#111"></div>
<div class="abs" style="left:1274px;top:914.5px;width:12px;height:12px;border-radius:50%;background:#444"></div>
<div class="abs" style="left:1315px;top:1231px;width:12px;height:12px;border-radius:50%;background:#444"></div>

<div id="detail">
<div class="dr mono" style="top:-27px;"><span>Sequence Number: 1    (relative sequence number)</span></div>
<div class="dr mono" style="top:9px;"><span>Sequence Number (raw): 3206299307</span></div>
<div class="dr mono" style="top:45px;"><span>[Next Sequence Number: 32    (relative sequence number)]</span></div>
<div class="dr mono" style="top:81px;"><span>Acknowledgment Number: 28    (relative ack number)</span></div>
<div class="dr mono" style="top:117px;"><span>Acknowledgment number (raw): 2112280875</span></div>
<div class="dr mono" style="top:153px;"><span>1000 .... = Header Length: 32 bytes (8)</span></div>
<div class="dr mono" style="top:189px;"><i class="tri"></i><span>Flags: 0x018 (PSH, ACK)</span></div>
<div class="dr mono" style="top:225px;"><span>Window: 2048</span></div>
<div class="dr mono" style="top:261px;"><span>[Calculated window size: 2048]</span></div>
<div class="dr mono" style="top:297px;"><span>[Window size scaling factor: -1 (unknown)]</span></div>
<div class="dr mono" style="top:333px;"><span>Checksum: 0xe327 [unverified]</span></div>
<div class="dr mono" style="top:369px;"><span>[Checksum Status: Unverified]</span></div>
<div class="dr mono" style="top:405px;"><span>Urgent Pointer: 0</span></div>
<div class="dr mono" style="top:441px;"><i class="tri"></i><span>Options: (12 bytes), No-Operation (NOP), No-Operation (NOP), Timestamps</span></div>
<div class="dr mono" style="top:477px;"><i class="tri"></i><span>[Timestamps]</span></div>
<div class="dr mono" style="top:513px;"><i class="tri"></i><span>[SEQ/ACK analysis]</span></div>
<div class="dr mono" style="top:549px;background:linear-gradient(#171717 0,#171717 1px,#043bc8 1px,#043bc8 35px,#363636 35px);color:#fff;"><span>TCP payload (31 bytes)</span></div>
<div class="abs" style="left:1280px;top:0;width:29.5px;height:584px;background:#363636"></div>
<div class="abs" style="left:1288px;top:175px;width:16px;height:276px;border-radius:8px;background:#757575"></div>
<div class="abs" style="left:0;top:584px;width:1280px;height:30px;background:#363636"></div>
<div class="abs" style="left:5.9px;top:591.6px;width:1040px;height:16.5px;border-radius:8.25px;background:#757575"></div>
<div class="abs" style="left:1279px;top:583px;width:31px;height:31px;background:#171717;border-left:2px solid #e6e6e6;border-top:2px solid #e6e6e6"></div>

</div>
<div id="hex">
<div class="abs" style="left:0;top:0;width:95px;height:618px;background:#333"></div>
<div class="hl" style="left:202.5px;top:60.5px;width:658.0px;height:30.0px;background:#333"></div>
<div class="hl" style="left:108.5px;top:90.5px;width:752.0px;height:31.0px;background:#333"></div>
<div class="hl" style="left:108.5px;top:121.5px;width:80.0px;height:30.0px;background:#333"></div>
<div class="hl" style="left:202.5px;top:121.5px;width:658.0px;height:30.0px;background:#2f4b7a"></div>
<div class="hl" style="left:108.5px;top:151.5px;width:752.0px;height:30.0px;background:#2f4b7a"></div>
<div class="hl" style="left:108.5px;top:181.5px;width:34.0px;height:31.0px;background:#2f4b7a"></div>
<div class="hl" style="left:936.5px;top:60.5px;width:236.0px;height:30.0px;background:#333"></div>
<div class="hl" style="left:907.0px;top:90.5px;width:265.5px;height:31.0px;background:#333"></div>
<div class="hl" style="left:907.0px;top:121.5px;width:29.5px;height:30.0px;background:#333"></div>
<div class="hl" style="left:936.5px;top:121.5px;width:236.0px;height:30.0px;background:#2f4b7a"></div>
<div class="hl" style="left:907.0px;top:151.5px;width:265.5px;height:30.0px;background:#2f4b7a"></div>
<div class="hl" style="left:907.0px;top:181.5px;width:15.5px;height:31.0px;background:#2f4b7a"></div>

<div class="hr mono" style="top:0.5px"><span class="abs" style="left:16.5px;color:#858585">0000</span><span class="abs" style="left:110px">70 5d cc 51 84 80 f4 5c  89 99 ca 77 08 00 45 00</span><span class="abs" style="left:908px">p]·Q···\ ···w··E·</span></div>
<div class="hr mono" style="top:30.8px"><span class="abs" style="left:16.5px;color:#858585">0010</span><span class="abs" style="left:110px">00 53 00 00 40 00 40 06  57 8d c0 a8 0a 67 74 7a</span><span class="abs" style="left:908px">·S··@·@· W····gtz</span></div>
<div class="hr mono" style="top:61.1px"><span class="abs" style="left:16.5px;color:#858585">0020</span><span class="abs" style="left:110px">a3 8e d3 6f 01 bb bf 1c  3e ab 7d e6 d9 2b 80 18</span><span class="abs" style="left:908px">···o···· &gt;·}··+··</span></div>
<div class="hr mono" style="top:91.4px"><span class="abs" style="left:16.5px;color:#858585">0030</span><span class="abs" style="left:110px">08 00 e3 27 00 00 01 01  08 0a 3c c2 95 ec 34 ec</span><span class="abs" style="left:908px">···&#x27;···· ··&lt;···4·</span></div>
<div class="hr mono" style="top:121.7px"><span class="abs" style="left:16.5px;color:#c4c4c4">0040</span><span class="abs" style="left:110px">92 af 17 03 03 00 1a 23  05 e4 c0 1e b6 66 24 35</span><span class="abs" style="left:908px">·······# ·····f$5</span></div>
<div class="hr mono" style="top:152.0px"><span class="abs" style="left:16.5px;color:#c4c4c4">0050</span><span class="abs" style="left:110px">9c 53 27 d7 56 1f fd f8  7f 56 88 03 3b b9 02 eb</span><span class="abs" style="left:908px">·S&#x27;·V··· ·V··;···</span></div>
<div class="hr mono" style="top:182.3px"><span class="abs" style="left:16.5px;color:#c4c4c4">0060</span><span class="abs" style="left:110px">b1</span><span class="abs" style="left:908px">·</span></div>
</div>
<div class="abs" style="left:2px;top:1544px;width:2556px;height:2px;background:#171717"></div>
<div id="status">
<div class="abs" style="left:18.2px;top:10.6px;width:28px;height:28px;border-radius:50%;box-sizing:border-box;border:1.6px solid #8c8c34;background:radial-gradient(circle closest-side at 48% 42%,#e6e688 0,#dddd5c 70%,#d4d44c 100%)"></div>
<svg class="abs" style="left:66px;top:8px" width="36" height="34" viewBox="0 0 36 34">
<path d="M3.2,3.2 H20 L24.4,7.6 V30.1 H3.2 Z" fill="#f3f3e9"/>
<path d="M3.2,3.2 H19.6 L20.6,4.2 V9.6 H3.2 Z" fill="#2b9fdf"/>
<path d="M8,9.6 C8.8,7 10.6,5.2 13.2,4.4 C12.2,6.2 12,8 12.8,9.6 Z" fill="#f3f3e9"/>
<text x="13.8" y="16.4" font-family="Liberation Sans, sans-serif" font-size="5" fill="#a2a2a2" text-anchor="middle">01010</text>
<text x="13.8" y="22.2" font-family="Liberation Sans, sans-serif" font-size="5" fill="#a2a2a2" text-anchor="middle">01101</text>
<text x="13.8" y="28" font-family="Liberation Sans, sans-serif" font-size="5" fill="#a2a2a2" text-anchor="middle">01110</text>
<path d="M27.2,4.8 L14.4,18" stroke="#4c4d4a" stroke-width="4.2" stroke-linecap="round"/>
<path d="M10,22.6 L12.4,16.6 L16.2,20.4 Z" fill="#0a0a0a"/>
</svg>
<div class="abs" style="left:1659px;top:20px;width:12px;height:12px;border-radius:50%;background:#444"></div>
<div class="abs" style="left:2357px;top:20px;width:12px;height:12px;border-radius:50%;background:#444"></div>

<div class="st" id="st1" style="left:137px">The TCP payload of this packet (tcp.payload), 31 bytes</div>
<div class="st" id="st2" style="left:1694px">Packets: 27 · Displayed: 27 (100.0%) · Dropped: 0 (0.0%)</div>
<div class="st" id="st3" style="left:2393px">Profile: Default</div>
</div>
</div>
</body></html>
